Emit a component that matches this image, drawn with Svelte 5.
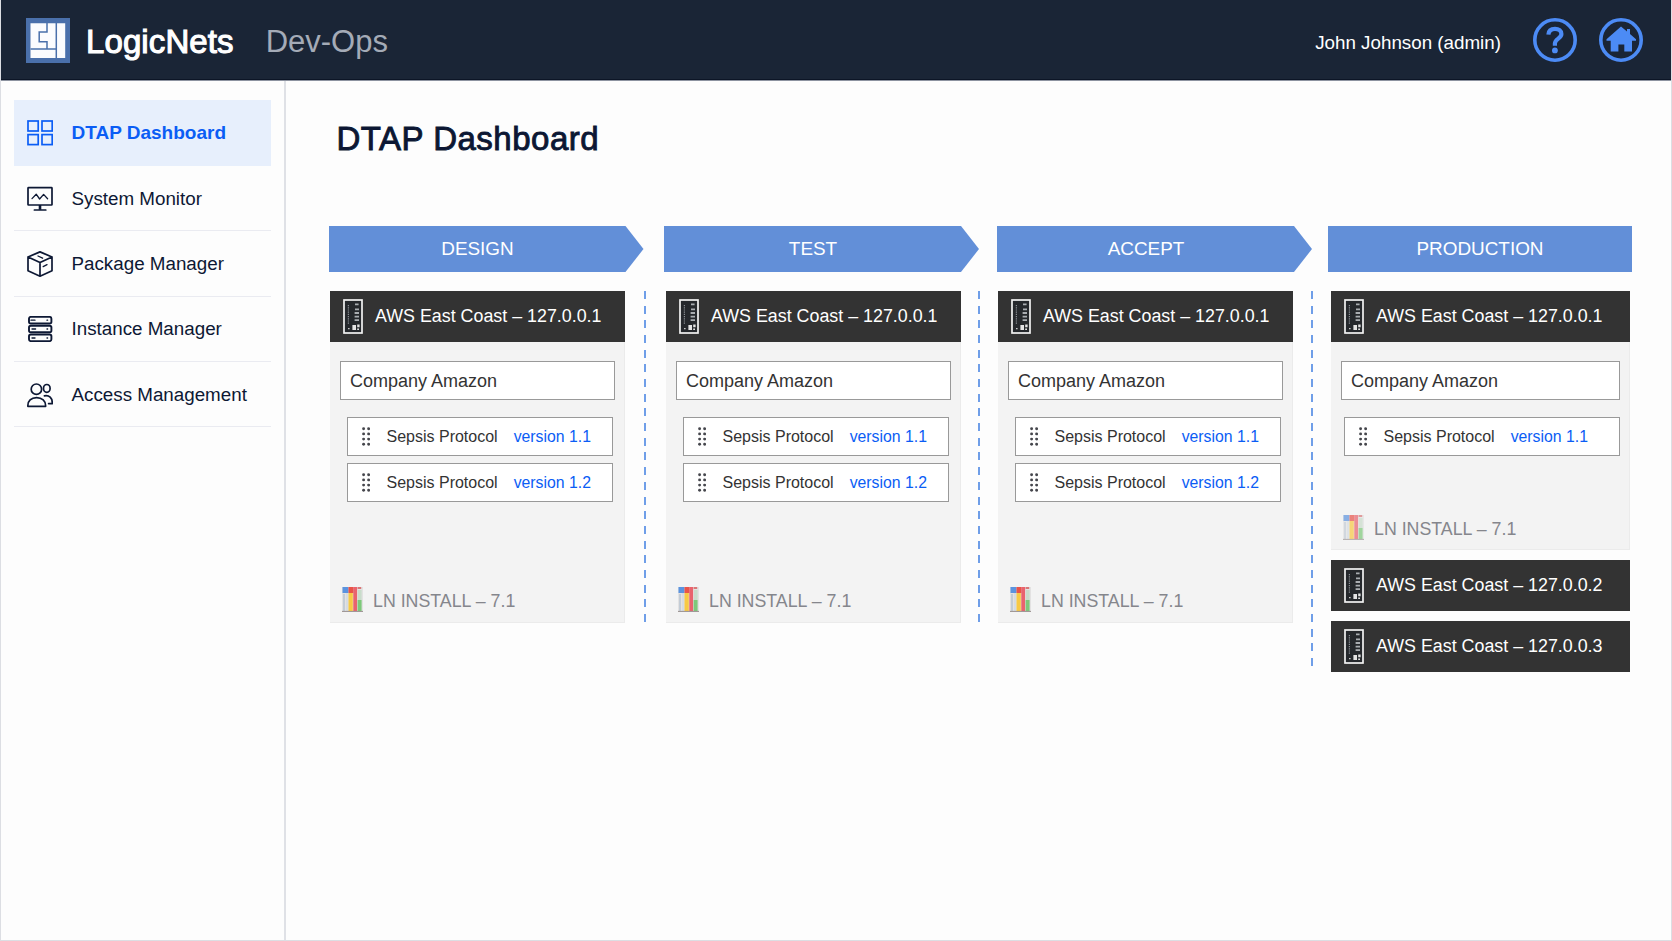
<script lang="ts">
  type Server = { host: string; company?: string; packages?: string[]; install?: string };
  type Stage = { id: string; label: string; servers: Server[] };

  const menu = [
    { id: 'dashboard', label: 'DTAP Dashboard' },
    { id: 'monitor', label: 'System Monitor' },
    { id: 'package', label: 'Package Manager' },
    { id: 'instance', label: 'Instance Manager' },
    { id: 'access', label: 'Access Management' }
  ];

  const first = (packages: string[]): Server => ({
    host: '127.0.0.1',
    company: 'Company Amazon',
    packages,
    install: 'LN INSTALL – 7.1'
  });

  const stages: Stage[] = [
    { id: 'design', label: 'DESIGN', servers: [first(['1.1', '1.2'])] },
    { id: 'test', label: 'TEST', servers: [first(['1.1', '1.2'])] },
    { id: 'accept', label: 'ACCEPT', servers: [first(['1.1', '1.2'])] },
    {
      id: 'production',
      label: 'PRODUCTION',
      servers: [first(['1.1']), { host: '127.0.0.2' }, { host: '127.0.0.3' }]
    }
  ];

  let active = $state('dashboard');
</script>

<div class="app">
  <header>
    <svg class="logo" width="44" height="45" viewBox="0 0 44 45">
      <rect width="44" height="45" fill="#4a70ab" />
      <path d="M4.5 5.2H39.2V40H4.5Z" fill="#fbfcfe" />
      <path
        d="M21 5V14H13.2V23.8H21V31M4.5 31H30.3M30.3 5V40"
        fill="none"
        stroke="#4a70ab"
        stroke-width="1.5"
      />
    </svg>
    <span class="brand">LogicNets</span>
    <span class="product">Dev-Ops</span>
    <span class="user">John Johnson (admin)</span>
    <button class="round help" aria-label="Help">
      <svg width="44" height="44" viewBox="0 0 44 44" fill="none" stroke="#4c8bf5">
        <circle cx="22" cy="22" r="20.2" stroke-width="3.6" />
        <path
          d="M15.4 16.6C15.6 12.4 18.2 10.8 22 10.8C25.8 10.8 28.4 12.8 28.4 16C28.4 20.6 21.9 20.6 21.9 25.6V27.8"
          stroke-width="4.2"
        />
        <circle cx="21.9" cy="32.4" r="2.9" fill="#4c8bf5" stroke="none" />
      </svg>
    </button>
    <button class="round" aria-label="Home">
      <svg width="44" height="44" viewBox="0 0 44 44">
        <circle cx="22" cy="22" r="20.2" fill="none" stroke="#4c8bf5" stroke-width="3.6" />
        <path
          d="M22 8.5L28 13.5V11H31V16L37 21.3V22.8H33V33.5H25.3V26.5H19.4V33.5H11.7V22.8H7.5V21.3Z"
          fill="#4c8bf5"
        />
      </svg>
    </button>
  </header>

  <div class="layout">
    <nav>
      {#each menu as item}
        <button class="item" class:active={active === item.id} onclick={() => (active = item.id)}>
          <svg
            width="26"
            height="26"
            viewBox="0 0 26 26"
            fill="none"
            stroke="currentColor"
            stroke-width="1.7"
            stroke-linejoin="round"
            stroke-linecap="round"
          >
            {#if item.id === 'dashboard'}
              <g stroke-linejoin="miter">
                <rect x="1" y="1" width="10.2" height="10" />
                <rect x="15" y="1" width="10.2" height="10" />
                <rect x="1" y="14.6" width="10.2" height="10" />
                <rect x="15" y="14.6" width="10.2" height="10" />
              </g>
            {:else if item.id === 'monitor'}
              <rect x="1" y="1.6" width="24" height="17.4" rx="0.6" />
              <path d="M5 12.6L9.2 8.2L12.6 13L16.6 8.4L20.6 12.8" stroke-width="1.3" />
              <path d="M13 19V23.8" stroke-width="2.6" stroke-linecap="butt" />
              <path d="M7.4 24H18.8" />
            {:else if item.id === 'package'}
              <path d="M13 0.9L25 6V19.8L13 25.2L1 19.8V6ZM1 6L13 11.6L25 6M13 11.6V25" />
              <path d="M11 5L15.6 7.2M16.2 15.6L20 13.6" stroke-width="1.3" />
            {:else if item.id === 'instance'}
              <g stroke-width="1.9">
                <rect x="2" y="0.9" width="22.4" height="6.6" rx="1.8" />
                <rect x="2" y="9.8" width="22.4" height="6.4" rx="1.8" />
                <rect x="2" y="18.5" width="22.4" height="6.6" rx="1.8" />
              </g>
              <path d="M4 4.2H8M5 13H8.6M5 22H8M20 4.2H20.6M20 13H20.6M20 22H20.6" stroke-width="1.3" />
            {:else}
              <circle cx="9.4" cy="7.2" r="5.2" />
              <path d="M0.9 24.4C0.4 19 4.4 15.6 9.6 15.6C14.8 15.6 19 19 18.6 24.4Z" />
              <ellipse cx="19.8" cy="6.4" rx="3.3" ry="3.9" />
              <path d="M17.4 13.8C22 12.8 25.6 16 25.2 21.6H21.6" />
            {/if}
          </svg>
          <span>{item.label}</span>
        </button>
      {/each}
    </nav>

    <main>
      <h1>DTAP Dashboard</h1>

      <div class="stages">
        {#each stages as stage}
          <section class="stage {stage.id}">
            <h2>{stage.label}</h2>
            <div class="lane">
              <div class="servers">
                {#each stage.servers as server}
                  <article>
                    <div class="host">
                      <svg width="20" height="35" viewBox="0 0 20 35">
                        <rect x="1" y="1" width="18" height="33" fill="#25282c" stroke="#f2f2f2" stroke-width="1.7" />
                        <path d="M5.4 6V25" stroke="#8b8f94" stroke-width="1.2" stroke-dasharray="1.2 1" />
                        <path d="M5 29.6H6.6" stroke="#c8c8c8" stroke-width="1.4" />
                        <path
                          d="M12 5.4H15.6M12 10.4H16M11.6 14H16M11.6 17.6H16M11.6 21.2H16"
                          stroke="#a9adb1"
                          stroke-width="1.8"
                        />
                        <path d="M9.4 26H13V31H9.4ZM14.2 25.6H16.6V28.2H14.2ZM14.2 29.4H16V31H14.2Z" fill="#e4e4e4" />
                      </svg>
                      <span>AWS East Coast – {server.host}</span>
                    </div>
                    {#if server.company}
                      <div class="panel">
                        <div class="company">{server.company}</div>
                        {#each server.packages ?? [] as version}
                          <div class="package">
                            <svg width="8" height="19" viewBox="0 0 8 19" fill="#45464c">
                              {#each [1.7, 6.9, 12.1, 17.3] as y}
                                <circle cx="1.6" cy={y} r="1.45" />
                                <circle cx="6.6" cy={y} r="1.45" />
                              {/each}
                            </svg>
                            <span class="name">Sepsis Protocol</span>
                            <span class="version">version {version}</span>
                          </div>
                        {/each}
                        <div class="install">
                          <svg width="21" height="25" viewBox="0 0 21 25">
                            <rect width="21" height="25" fill="#e3e2e2" />
                            <rect x="0.5" width="6" height="6" fill="#5b93df" />
                            <rect x="1" y="7" width="2" height="17" fill="#c3ccd6" />
                            <rect x="4" y="6" width="2" height="18" fill="#d5dbe3" />
                            <rect x="6.5" width="5" height="6" fill="#e95349" />
                            <rect x="6.5" y="6" width="4.3" height="18" fill="#f8c944" />
                            <rect x="11.3" width="3.8" height="24" fill="#e9636d" />
                            <rect x="15.6" width="3.6" height="2" fill="#d97777" />
                            <rect x="16" y="3" width="3.6" height="10" fill="#c9dccb" />
                            <rect x="15.6" y="13" width="4" height="11" fill="#7dc97a" />
                            <path d="M0 24.4H21" stroke="#99908e" stroke-width="1" />
                          </svg>
                          <span>{server.install}</span>
                        </div>
                      </div>
                    {/if}
                  </article>
                {/each}
              </div>
              {#if stage.id !== 'production'}
                <div class="divider"></div>
              {/if}
            </div>
          </section>
        {/each}
      </div>
    </main>
  </div>
</div>

<style>
  :global(body) {
    background: #fdfdfd;
    font-family: 'Liberation Sans', Arial, sans-serif;
  }

  .app {
    box-sizing: border-box;
    height: 941px;
    display: flex;
    flex-direction: column;
    border: 1px solid #dcdee3;
    border-top: none;
    overflow: hidden;
  }

  button {
    padding: 0;
    border: none;
    background: none;
    font: inherit;
    cursor: pointer;
  }

  svg {
    display: block;
    flex: none;
  }

  header {
    box-sizing: border-box;
    height: 81px;
    flex: none;
    display: flex;
    align-items: center;
    padding: 0 28px 0 25px;
    background: #1a2536;
    border-bottom: 1px solid #8d93a0;
    box-shadow: inset 0 -1px #0c1526;
    white-space: nowrap;
  }

  .logo {
    margin-top: 1px;
  }

  .brand {
    margin: 3px 0 0 16px;
    font-size: 33px;
    letter-spacing: 0.1px;
    color: #fff;
    -webkit-text-stroke: 1.1px #fff;
  }

  .product {
    margin: 3px 0 0 32px;
    font-size: 31px;
    color: #a4abb7;
  }

  .user {
    margin: 5px 0 0 auto;
    font-size: 18.8px;
    color: #fff;
  }

  .round {
    margin-left: 22px;
  }

  .round.help {
    margin-left: 32px;
  }

  .layout {
    flex: 1;
    display: flex;
    min-height: 0;
  }

  nav {
    box-sizing: border-box;
    width: 285px;
    flex: none;
    padding: 18.5px 13px 0;
    border-right: 2px solid #dfe1e6;
  }

  .item {
    box-sizing: border-box;
    width: 257px;
    height: 65.4px;
    display: flex;
    align-items: center;
    gap: 19px;
    padding-left: 12.5px;
    border-bottom: 1px solid #eaebf1;
    color: #0d1834;
    font-size: 18.8px;
    white-space: nowrap;
  }

  .item span {
    margin-top: 1px;
  }

  .item svg {
    margin-top: 1px;
  }

  .item.active {
    height: 66.4px;
    background: #e7effc;
    border-bottom-color: #e7effc;
    color: #0b5df5;
    font-size: 19px;
    font-weight: 700;
  }

  main {
    flex: 1;
    padding: 38px 0 0 42.5px;
  }

  h1 {
    margin: 0 0 69px 8px;
    height: 38px;
    line-height: 39px;
    font-size: 33px;
    font-weight: 400;
    letter-spacing: 0.5px;
    color: #0c1733;
    -webkit-text-stroke: 0.9px #0c1733;
  }

  .stages {
    display: grid;
    grid-template-columns: 335.5px 333px 331px 304px;
    align-items: start;
  }

  h2 {
    box-sizing: border-box;
    width: 315px;
    height: 46px;
    margin: 0 0 19px;
    padding-right: 17px;
    line-height: 46px;
    font-size: 18.9px;
    font-weight: 400;
    text-align: center;
    color: #fff;
    background: #628fd8;
    clip-path: polygon(0 0, 297px 0, 100% 50%, 297px 100%, 0 100%);
  }

  .production h2 {
    width: 304px;
    padding-right: 0;
    clip-path: none;
  }

  .lane {
    display: flex;
    padding-left: 1.5px;
  }

  .test .lane {
    padding-left: 2px;
  }

  .accept .lane {
    padding-left: 1px;
  }

  .production .lane {
    padding-left: 3px;
  }

  .servers {
    width: 295px;
    display: flex;
    flex-direction: column;
    gap: 10px;
  }

  .production .servers {
    width: 299px;
  }

  .divider {
    width: 2px;
    margin-left: 19px;
    background: repeating-linear-gradient(#6f9ee8 0 8px, transparent 8px 14.68px);
  }

  .test .divider {
    margin-left: 17px;
  }

  .accept .divider {
    margin-left: 18px;
    margin-bottom: -50px;
  }

  .host {
    height: 51px;
    display: flex;
    align-items: center;
    gap: 12px;
    padding-left: 13px;
    background: #333;
    color: #fff;
    font-size: 17.85px;
    white-space: nowrap;
  }

  .panel {
    box-sizing: border-box;
    height: 281px;
    display: flex;
    flex-direction: column;
    padding: 19px 9px 10px 10px;
    background: #f3f3f3;
    border: solid #ebebeb;
    border-width: 0 1px 1px 0;
    white-space: nowrap;
  }

  .production .panel {
    height: 208px;
    padding-bottom: 9px;
  }

  .company {
    box-sizing: border-box;
    height: 39px;
    margin-bottom: 10px;
    padding-left: 9px;
    border: 1px solid #999;
    background: #fff;
    line-height: 38px;
    font-size: 18px;
    color: #333;
  }

  .package {
    box-sizing: border-box;
    height: 39px;
    display: flex;
    align-items: center;
    margin: 7px 2px 0 7px;
    padding-left: 13.5px;
    border: 1px solid #999;
    background: #fff;
    font-size: 16px;
  }

  .production .package {
    margin: 7px 0 0 3px;
  }

  .name {
    margin-left: 17px;
    color: #333;
  }

  .version {
    margin-left: 16px;
    font-size: 15.8px;
    color: #0b5df5;
  }

  .install {
    display: flex;
    align-items: center;
    gap: 10.5px;
    margin-top: auto;
    margin-left: 1.5px;
    font-size: 17.8px;
    color: #85868c;
  }

  .install span {
    margin-top: 4px;
  }

  .production .install svg {
    opacity: 0.7;
  }
</style>
